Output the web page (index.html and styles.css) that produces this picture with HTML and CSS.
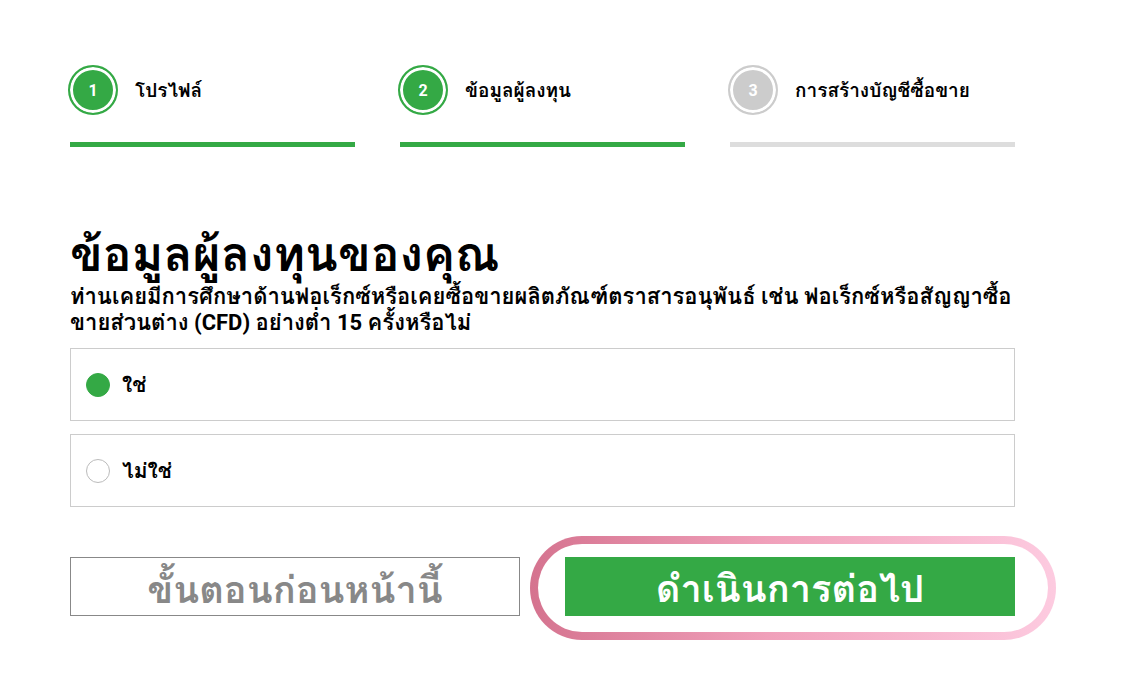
FILE: index.html
```html
<!DOCTYPE html>
<html lang="th">
<head>
  <meta charset="UTF-8" />
  <meta name="viewport" content="width=device-width, initial-scale=1.0"/>
  <title>ข้อมูลผู้ลงทุน</title>
  <link rel="stylesheet" href="styles.css">
</head>
<body>

  <div class="page">
    <ol class="steps">
      <li class="step done">
        <div class="step-head">
          <span class="step-num">1</span>
          <span class="step-label">โปรไฟล์</span>
        </div>
        <div class="step-bar"></div>
      </li>
      <li class="step done">
        <div class="step-head">
          <span class="step-num">2</span>
          <span class="step-label">ข้อมูลผู้ลงทุน</span>
        </div>
        <div class="step-bar"></div>
      </li>
      <li class="step">
        <div class="step-head">
          <span class="step-num">3</span>
          <span class="step-label">การสร้างบัญชีซื้อขาย</span>
        </div>
        <div class="step-bar"></div>
      </li>
    </ol>

    <h1>ข้อมูลผู้ลงทุนของคุณ</h1>
    <p class="question">ท่านเคยมีการศึกษาด้านฟอเร็กซ์หรือเคยซื้อขายผลิตภัณฑ์ตราสารอนุพันธ์ เช่น ฟอเร็กซ์หรือสัญญาซื้อขายส่วนต่าง (CFD) อย่างต่ำ 15 ครั้งหรือไม่</p>

    <div class="options">
      <label class="option">
        <span class="radio checked"></span>
        <span class="option-text">ใช่</span>
      </label>
      <label class="option">
        <span class="radio"></span>
        <span class="option-text">ไม่ใช่</span>
      </label>
    </div>

    <div class="actions">
      <button class="btn-back">ขั้นตอนก่อนหน้านี้</button>
      <div class="next-ring">
        <button class="btn-next">ดำเนินการต่อไป</button>
      </div>
    </div>
  </div>

</body>
</html>
```

FILE: styles.css
```css
* {
  box-sizing: border-box;
}

body {
  margin: 0;
  font-family: Roboto, Loma, "Noto Sans Thai", sans-serif;
  background-color: #fff;
  color: #000;
}

.page {
  width: 945px;
  margin-left: 70px;
  padding-top: 65px;
  padding-bottom: 40px;
}

/* steps */
.steps {
  list-style: none;
  margin: 0;
  padding: 0;
  display: flex;
  gap: 45px;
}

.step {
  flex: 1;
}

.step-head {
  display: flex;
  align-items: center;
  gap: 17px;
  height: 50px;
}

.step-num {
  width: 50px;
  height: 50px;
  margin-left: -2px;
  border-radius: 50%;
  border: 2px solid #ccc;
  box-shadow: inset 0 0 0 3px #fff;
  background-color: #ccc;
  color: #fff;
  font-size: 16px;
  font-weight: bold;
  display: flex;
  align-items: center;
  justify-content: center;
}

.step.done .step-num {
  border-color: #34a945;
  background-color: #34a945;
}

.step-label {
  font-size: 19px;
  font-weight: bold;
}

.step-bar {
  height: 5px;
  margin-top: 27px;
  background-color: #ddd;
}

.step.done .step-bar {
  background-color: #34a945;
}

/* question */
h1 {
  font-size: 48px;
  font-weight: bold;
  line-height: 56px;
  margin: 80px 0 0;
}

.question {
  font-size: 22px;
  font-weight: bold;
  line-height: 26px;
  margin: 1px 0 12px;
}

.options {
  display: flex;
  flex-direction: column;
  gap: 13px;
}

.option {
  display: flex;
  align-items: center;
  gap: 12px;
  height: 73px;
  padding: 0 15px;
  border: 1px solid #ccc;
}

.radio {
  width: 24px;
  height: 24px;
  border-radius: 50%;
  border: 1px solid #bbb;
  background-color: #fff;
}

.radio.checked {
  border-color: #34a945;
  background-color: #34a945;
}

.option-text {
  font-size: 21px;
  font-weight: bold;
}

/* buttons */
.actions {
  display: flex;
  align-items: flex-start;
  gap: 10px;
  margin-top: 29px;
}

.actions button {
  height: 59px;
  font-family: inherit;
  font-size: 38px;
  font-weight: bold;
  cursor: pointer;
}

.btn-back {
  width: 450px;
  margin-top: 21px;
  background-color: #fff;
  color: #888;
  border: 1px solid #888;
}

.next-ring {
  width: 526px;
  margin-right: -41px;
  padding: 13px 33px 16px 27px;
  border: 8px solid transparent;
  border-radius: 60px;
  background: linear-gradient(#fff, #fff) padding-box,
    linear-gradient(90deg, #d5738f, #f0a0ba 45%, #fdcbe0) border-box;
}

.btn-next {
  width: 100%;
  background-color: #34a945;
  color: #fff;
  border: none;
}
```
